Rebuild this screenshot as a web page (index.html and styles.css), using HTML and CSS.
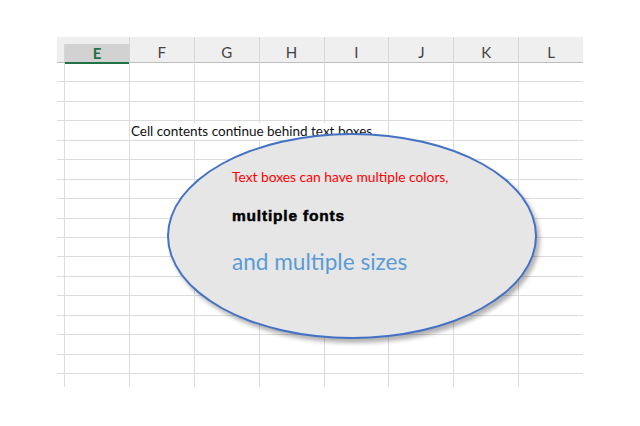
FILE: index.html
```html
<!DOCTYPE html>
<html>
<head>
<meta charset="utf-8">
<link rel="stylesheet" href="styles.css">
</head>
<body>
<div class="sheet">
  <div class="row head">
    <div class="c stub"></div>
    <div class="c sel">E</div>
    <div class="c">F</div>
    <div class="c">G</div>
    <div class="c">H</div>
    <div class="c">I</div>
    <div class="c">J</div>
    <div class="c">K</div>
    <div class="c">L</div>
  </div>
  <div class="row"><div class="c stub"></div><div class="c"></div><div class="c"></div><div class="c"></div><div class="c"></div><div class="c"></div><div class="c"></div><div class="c"></div><div class="c"></div></div>
  <div class="row"><div class="c stub"></div><div class="c"></div><div class="c"></div><div class="c"></div><div class="c"></div><div class="c"></div><div class="c"></div><div class="c"></div><div class="c"></div></div>
  <div class="row"><div class="c stub"></div><div class="c"></div><div class="c"></div><div class="c"></div><div class="c"></div><div class="c"></div><div class="c"></div><div class="c"></div><div class="c"></div></div>
  <div class="row"><div class="c stub"></div><div class="c"></div><div class="c txt"><span class="celltext">Cell contents continue behind text boxes</span></div><div class="c"></div><div class="c"></div><div class="c"></div><div class="c"></div><div class="c"></div><div class="c"></div></div>
  <div class="row"><div class="c stub"></div><div class="c"></div><div class="c"></div><div class="c"></div><div class="c"></div><div class="c"></div><div class="c"></div><div class="c"></div><div class="c"></div></div>
  <div class="row"><div class="c stub"></div><div class="c"></div><div class="c"></div><div class="c"></div><div class="c"></div><div class="c"></div><div class="c"></div><div class="c"></div><div class="c"></div></div>
  <div class="row"><div class="c stub"></div><div class="c"></div><div class="c"></div><div class="c"></div><div class="c"></div><div class="c"></div><div class="c"></div><div class="c"></div><div class="c"></div></div>
  <div class="row"><div class="c stub"></div><div class="c"></div><div class="c"></div><div class="c"></div><div class="c"></div><div class="c"></div><div class="c"></div><div class="c"></div><div class="c"></div></div>
  <div class="row"><div class="c stub"></div><div class="c"></div><div class="c"></div><div class="c"></div><div class="c"></div><div class="c"></div><div class="c"></div><div class="c"></div><div class="c"></div></div>
  <div class="row"><div class="c stub"></div><div class="c"></div><div class="c"></div><div class="c"></div><div class="c"></div><div class="c"></div><div class="c"></div><div class="c"></div><div class="c"></div></div>
  <div class="row"><div class="c stub"></div><div class="c"></div><div class="c"></div><div class="c"></div><div class="c"></div><div class="c"></div><div class="c"></div><div class="c"></div><div class="c"></div></div>
  <div class="row"><div class="c stub"></div><div class="c"></div><div class="c"></div><div class="c"></div><div class="c"></div><div class="c"></div><div class="c"></div><div class="c"></div><div class="c"></div></div>
  <div class="row"><div class="c stub"></div><div class="c"></div><div class="c"></div><div class="c"></div><div class="c"></div><div class="c"></div><div class="c"></div><div class="c"></div><div class="c"></div></div>
  <div class="row"><div class="c stub"></div><div class="c"></div><div class="c"></div><div class="c"></div><div class="c"></div><div class="c"></div><div class="c"></div><div class="c"></div><div class="c"></div></div>
  <div class="row"><div class="c stub"></div><div class="c"></div><div class="c"></div><div class="c"></div><div class="c"></div><div class="c"></div><div class="c"></div><div class="c"></div><div class="c"></div></div>
  <div class="row"><div class="c stub"></div><div class="c"></div><div class="c"></div><div class="c"></div><div class="c"></div><div class="c"></div><div class="c"></div><div class="c"></div><div class="c"></div></div>
  <div class="row last"><div class="c stub"></div><div class="c"></div><div class="c"></div><div class="c"></div><div class="c"></div><div class="c"></div><div class="c"></div><div class="c"></div><div class="c"></div></div>

  <div class="textbox">
    <p class="t1">Text boxes can have multiple colors,</p>
    <p class="t2">multiple fonts</p>
    <p class="t3">and multiple sizes</p>
  </div>
</div>
</body>
</html>
```

FILE: styles.css
```css
html, body {
  margin: 0;
  padding: 0;
  background: #ffffff;
}
body {
  font-family: "Lato", "Liberation Sans", sans-serif;
}
.sheet {
  position: relative;
  margin: 37px 0 0 57px;
  width: 526px;
}
.row {
  display: grid;
  grid-template-columns: 7px repeat(8, 1fr);
  height: 19.44px;
  box-sizing: border-box;
  border-bottom: 1px solid #dcdcdc;
}
.row.last {
  height: 13px;
  border-bottom: none;
}
.c {
  border-left: 1px solid #dcdcdc;
  box-sizing: border-box;
  min-width: 0;
}
.c.stub {
  border-left: none;
}
.row.head {
  height: 26px;
  background: #efefef;
  border-bottom: 1px solid #bdbdbd;
}
.row.head .c {
  border-left: 1px solid #d6d6d6;
  font-size: 15px;
  color: #444444;
  display: flex;
  align-items: center;
  justify-content: center;
  padding-top: 4px;
}
.row.head .c.stub {
  border-left: none;
}
.row.head .c.sel {
  background: #d2d2d2;
  color: #217346;
  font-weight: 700;
  margin-top: 7px;
  padding-top: 0;
  border-bottom: 2px solid #217346;
  margin-bottom: -1px;
}
.c.txt {
  display: flex;
  align-items: flex-end;
  white-space: nowrap;
}
.celltext {
  position: relative;
  z-index: 1;
  background: #ffffff;
  font-size: 13.5px;
  line-height: 17px;
  color: #111111;
  padding-left: 1px;
  padding-right: 2px;
}
.textbox {
  position: absolute;
  left: 110px;
  top: 96px;
  width: 370px;
  height: 206px;
  box-sizing: border-box;
  border: 2px solid #4472c4;
  border-radius: 50%;
  background: #e6e6e6;
  box-shadow: 3px 4px 4px rgba(0, 0, 0, 0.3);
  z-index: 2;
  padding: 33px 0 0 63px;
}
.textbox p {
  margin: 0;
  white-space: nowrap;
}
.t1 {
  color: #ff0000;
  font-size: 13.8px;
  line-height: 18px;
}
.t2 {
  margin-top: 21px !important;
  font-family: "Liberation Sans", sans-serif;
  font-weight: 700;
  font-size: 15.5px;
  letter-spacing: 0.8px;
  -webkit-text-stroke: 0.5px #000000;
  line-height: 18px;
  color: #000000;
}
.t3 {
  margin-top: 23px !important;
  color: #5b9bd5;
  font-size: 22.6px;
  line-height: 27px;
}
```
